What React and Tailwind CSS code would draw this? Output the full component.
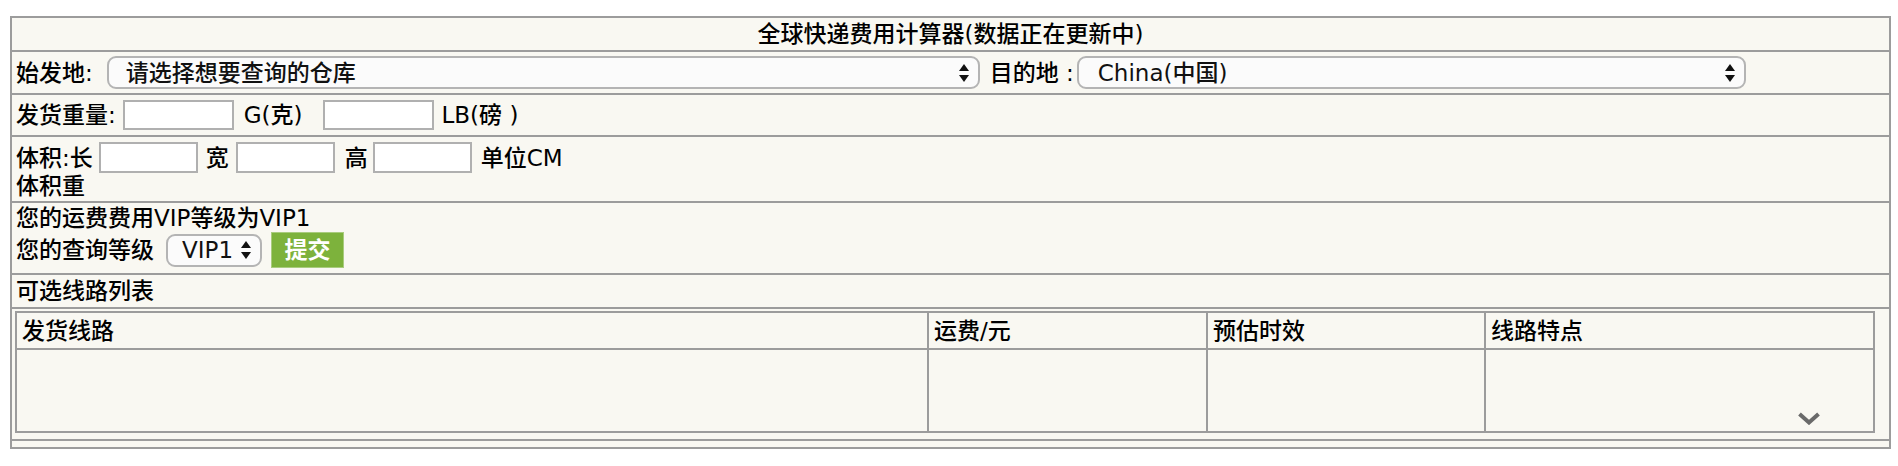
import React from 'react';

const font = { fontFamily: '"DejaVu Sans", "Noto Sans CJK SC", sans-serif' };

function Arrows() {
    return (
        <svg width="10" height="20" viewBox="0 0 10 20" className="shrink-0">
            <polygon points="5,1 10,8 0,8" fill="#111" />
            <polygon points="0,12 10,12 5,19" fill="#111" />
        </svg>
    );
}

function FakeSelect({ value, className, textPad = 'pl-[17px]' }) {
    return (
        <div
            className={`flex items-center justify-between rounded-[9px] border-2 border-[#b4b4b4] bg-[#fbfbfb] pr-[9px] ${textPad} ${className}`}
        >
            <span className="whitespace-nowrap text-[#111]">{value}</span>
            <Arrows />
        </div>
    );
}

function TextBox({ className }) {
    return <input type="text" className={`border-2 border-[#b0b0b0] bg-white outline-none ${className}`} />;
}

export default function App() {
    const cols = ['发货线路', '运费/元', '预估时效', '线路特点'];

    return (
        <div className="min-h-[466px] bg-white pt-[16px] pl-[10px] text-[23px] leading-[26px] font-medium text-black" style={font}>
            <div className="w-[1881px] border-2 border-[#9c9c9c] bg-[#f9f8f2]">
                {/* title */}
                <div className="flex h-[34px] items-center justify-center border-b-2 border-[#9c9c9c]">
                    全球快递费用计算器(数据正在更新中)
                </div>

                {/* origin / destination */}
                <div className="flex h-[43px] items-center border-b-2 border-[#9c9c9c] pl-[4px]">
                    <span>始发地:</span>
                    <FakeSelect value="请选择想要查询的仓库" className="ml-[14px] h-[33px] w-[873px]" />
                    <span className="ml-[10px]">目的地 :</span>
                    <FakeSelect value="China(中国)" className="ml-[3px] h-[33px] w-[669px]" textPad="pl-[19px]" />
                </div>

                {/* weight */}
                <div className="flex h-[42px] items-center border-b-2 border-[#9c9c9c] pl-[4px]">
                    <span>发货重量:</span>
                    <TextBox className="ml-[7px] h-[30px] w-[111px]" />
                    <span className="ml-[10px]">G(克)</span>
                    <TextBox className="ml-[20px] h-[30px] w-[111px]" />
                    <span className="ml-[8px]">LB(磅 )</span>
                </div>

                {/* volume */}
                <div className="flex h-[66px] flex-col border-b-2 border-[#9c9c9c] pt-[5px] pl-[4px]">
                    <div className="flex h-[31px] items-center">
                        <span>体积:长</span>
                        <TextBox className="ml-[6px] h-[31px] w-[99px]" />
                        <span className="ml-[8px]">宽</span>
                        <TextBox className="ml-[7px] h-[31px] w-[99px]" />
                        <span className="ml-[10px]">高</span>
                        <TextBox className="ml-[5px] h-[31px] w-[99px]" />
                        <span className="ml-[9px]">单位CM</span>
                    </div>
                    <div>体积重</div>
                </div>

                {/* vip */}
                <div className="flex h-[72px] flex-col border-b-2 border-[#9c9c9c] pt-[2px] pl-[4px]">
                    <div>您的运费费用VIP等级为VIP1</div>
                    <div className="flex h-[38px] items-center">
                        <span>您的查询等级</span>
                        <FakeSelect value="VIP1" className="ml-[12px] h-[33px] w-[96px]" textPad="pl-[14px]" />
                        <button className="ml-[9px] flex h-[36px] w-[73px] items-center justify-center border border-[#a9cc7e] bg-[#7db23c] font-bold text-white">
                            提交
                        </button>
                    </div>
                </div>

                {/* routes label */}
                <div className="flex h-[34px] items-center border-b-2 border-[#9c9c9c] pl-[4px]">
                    可选线路列表
                </div>

                {/* routes table */}
                <div className="h-[132px] border-b-2 border-[#9c9c9c] pt-[2px] pl-[3px]">
                    <div className="w-[1860px] border-2 border-[#9c9c9c]">
                        <div className="grid grid-cols-[912px_279px_278px_1fr] border-b-2 border-[#9c9c9c]">
                            {cols.map((c, i) => (
                                <div
                                    key={c}
                                    className={`flex h-[35px] items-center pl-[5px] ${i < 3 ? 'border-r-2 border-[#9c9c9c]' : ''}`}
                                >
                                    {c}
                                </div>
                            ))}
                        </div>
                        <div className="grid h-[81px] grid-cols-[912px_279px_278px_1fr]">
                            <div className="border-r-2 border-[#9c9c9c]"></div>
                            <div className="border-r-2 border-[#9c9c9c]"></div>
                            <div className="border-r-2 border-[#9c9c9c]"></div>
                            <div className="flex items-end justify-end pr-[52px] pb-[6px]">
                                <svg width="24" height="13" viewBox="0 0 24 13">
                                    <polyline points="2.5,2 12,10.5 21.5,2" fill="none" stroke="#6a6a6a" strokeWidth="4" />
                                </svg>
                            </div>
                        </div>
                    </div>
                </div>

                <div className="h-[6px]"></div>
            </div>
        </div>
    );
}
